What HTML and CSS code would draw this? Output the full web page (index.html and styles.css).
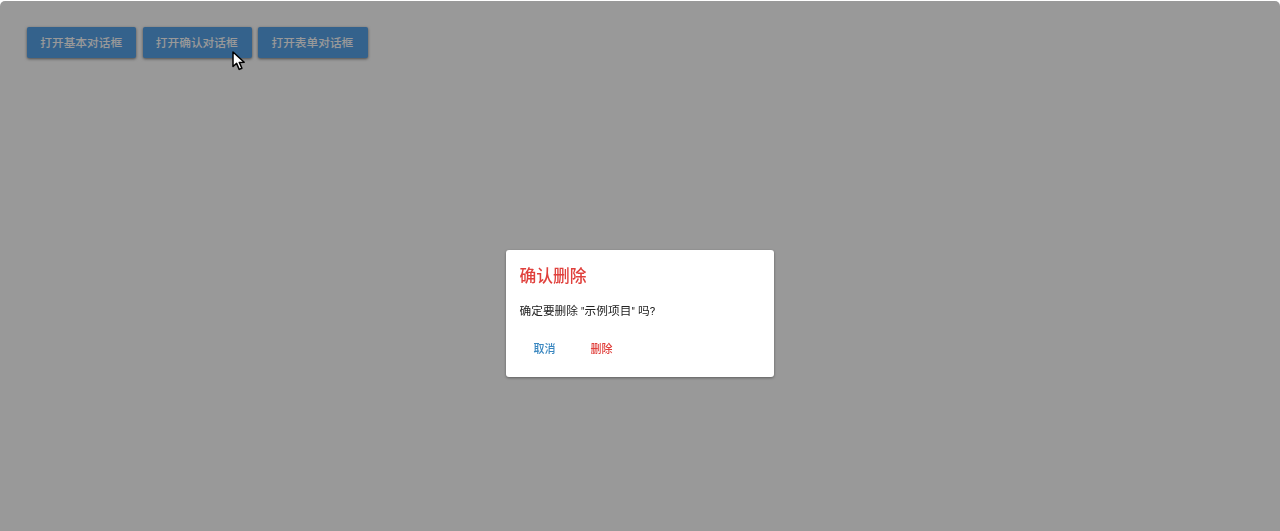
FILE: index.html
```html
<!DOCTYPE html>
<html lang="zh-CN">
<head>
    <meta charset="UTF-8">
    <meta name="viewport" content="width=device-width, initial-scale=1.0">
    <title>对话框示例</title>
    <link rel="stylesheet" href="styles.css">
</head>
<body>

    <div class="toolbar">
        <button class="button">打开基本对话框</button>
        <button class="button">打开确认对话框</button>
        <button class="button">打开表单对话框</button>
    </div>

    <div class="overlay">
        <div class="dialog">
            <h2 class="dialog-title">确认删除</h2>
            <p class="dialog-text">确定要删除 "示例项目" 吗?</p>
            <div class="dialog-actions">
                <button class="text-button cancel">取消</button>
                <button class="text-button danger">删除</button>
            </div>
        </div>
    </div>

    <!-- mouse pointer from the screen capture -->
    <svg class="cursor" width="15" height="20" viewBox="0 0 15 20">
        <path d="M1 1 L1 15.5 L4.6 12.4 L7.2 18.4 L9.9 17.2 L7.3 11.4 L12.2 11.2 Z" fill="#fff" stroke="#000" stroke-width="1.5" stroke-linejoin="round"/>
    </svg>

</body>
</html>
```

FILE: styles.css
```css
body {
    margin: 0;
    height: 531px;
    overflow: hidden;
    background-color: white;
    font-family: Roboto, "Noto Sans CJK SC", sans-serif;
}
.toolbar {
    display: flex;
    gap: 6.2px;
    padding: 27px;
}
.button {
    background-color: #57a3ea;
    color: white;
    width: 109.4px;
    height: 31px;
    padding: 0 1px 3px 0;
    border: none;
    border-radius: 2px;
    font-family: inherit;
    font-size: 11.7px;
    font-weight: 500;
    box-shadow: 0 1px 3px rgba(0, 0, 0, 0.5);
}
.overlay {
    position: fixed;
    top: 1px;
    right: 0;
    bottom: 0;
    left: 0;
    padding-top: 95px;
    display: flex;
    align-items: center;
    justify-content: center;
    background-color: rgba(0, 0, 0, 0.4);
    border-radius: 5px 5px 0 0;
}
.dialog {
    width: 268px;
    height: 127px;
    box-sizing: border-box;
    padding: 15px 14px 0 13.5px;
    background-color: white;
    border-radius: 3px;
    box-shadow: 0 1px 3px rgba(0, 0, 0, 0.4);
}
.dialog-title {
    margin: 0;
    font-size: 16.8px;
    line-height: 22px;
    font-weight: 500;
    color: #e0403c;
}
.dialog-text {
    margin: 15px 0 0;
    font-size: 11.7px;
    line-height: 18px;
    color: #222;
}
.dialog-actions {
    display: flex;
    gap: 7px;
    margin-top: 14px;
}
.text-button {
    width: 50px;
    height: 28px;
    padding: 0;
    border: none;
    background: none;
    font-family: inherit;
    font-size: 11px;
    font-weight: 500;
}
.cancel {
    color: #3a87c0;
}
.danger {
    color: #e0403c;
}
.cursor {
    position: absolute;
    left: 232px;
    top: 51px;
}
```
